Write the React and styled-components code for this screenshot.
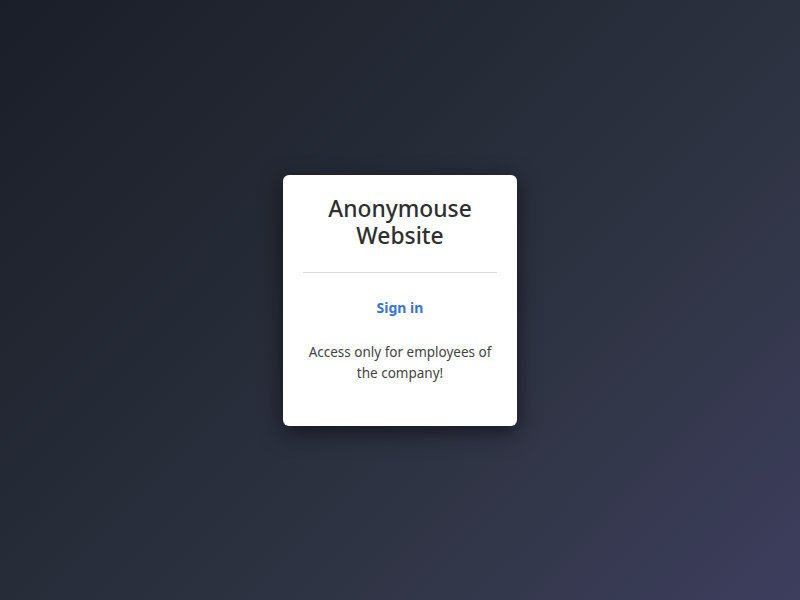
import React from "react";
import styled, { createGlobalStyle } from "styled-components";

const GlobalStyle = createGlobalStyle`
  html, body {
    margin: 0;
    padding: 0;
    height: 100%;
  }
  body {
    font-family: "Noto Sans", "Open Sans", sans-serif;
  }
  #root {
    height: 100%;
  }
`;

function App() {
  return (
    <>
      <GlobalStyle />
      <Page>
        <Card>
          <Title>Anonymouse Website</Title>
          <Divider />
          <SignIn href="#">Sign in</SignIn>
          <Note>Access only for employees of the company!</Note>
        </Card>
      </Page>
    </>
  );
}

const Page = styled.div`
  min-height: 100vh;
  display: flex;
  align-items: center;
  justify-content: center;
  background: linear-gradient(135deg, #1a1e28 0%, #272d39 45%, #33374a 75%, #3d3e5e 100%);
`;

const Card = styled.div`
  width: 234px;
  box-sizing: border-box;
  padding: 20px 20px 42px;
  background-color: #fff;
  border-radius: 6px;
  box-shadow: 0 6px 22px rgba(0, 0, 0, 0.55);
  text-align: center;
`;

const Title = styled.h1`
  margin: 0 4px;
  font-size: 22.8px;
  line-height: 27px;
  font-weight: 500;
  color: #2f2f2f;
`;

const Divider = styled.hr`
  margin: 23px 0 25px;
  border: none;
  border-top: 1px solid #dcdcdc;
`;

const SignIn = styled.a`
  display: block;
  font-size: 14px;
  line-height: 20px;
  font-weight: 700;
  color: #3a73d2;
  text-decoration: none;
`;

const Note = styled.p`
  margin: 24px 0 0;
  font-size: 13.5px;
  line-height: 21px;
  color: #444;
`;

export default App;
